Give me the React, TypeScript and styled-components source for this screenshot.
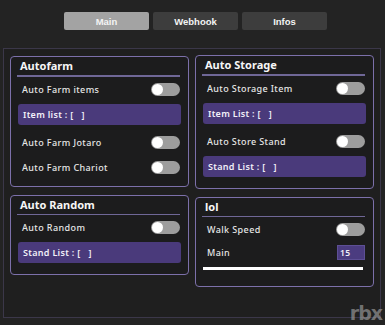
import React from "react";
import styled, { createGlobalStyle } from "styled-components";

const GlobalStyle = createGlobalStyle`
  html, body {
    margin: 0;
    padding: 0;
    background: #232323;
  }
  * {
    box-sizing: border-box;
  }
`;

const Screen = styled.div`
  position: relative;
  width: 385px;
  height: 325px;
  overflow: hidden;
  background: #232323;
  font-family: "Noto Sans", "Open Sans", sans-serif;
  color: #ececec;
`;

const TabBar = styled.div`
  display: flex;
  gap: 4px;
  padding: 12px 0 0 64px;
  height: 48px;
`;

const Tab = styled.div<{ active?: boolean }>`
  width: 85px;
  height: 18px;
  border-radius: 2px;
  display: flex;
  align-items: center;
  justify-content: center;
  font-family: "Liberation Sans", Arial, sans-serif;
  font-weight: 700;
  font-size: 9.5px;
  color: #f4f4f4;
  background: ${({ active }) => (active ? "#a3a3a3" : "#3d3d3d")};
`;

const Panel = styled.div`
  margin: 0 4px 0 3px;
  height: 270px;
  border: 1px solid #3b3749;
  background: #1f1f1f;
  padding: 6px 6px 0 6px;
  display: grid;
  grid-template-columns: 1fr 1fr;
  column-gap: 6px;
  align-items: start;
`;

const Column = styled.div<{ offset?: number }>`
  display: flex;
  flex-direction: column;
  gap: 8px;
  padding-top: ${({ offset }) => offset ?? 0}px;
`;

const Card = styled.div`
  border: 1.5px solid #7c70aa;
  border-radius: 4px;
  background: #1c1c1d;
  padding: 0 8px 6px 6px;
`;

const CardTitle = styled.div`
  height: 18px;
  padding: 2px 0 0 3px;
  font-weight: 700;
  font-size: 11px;
  line-height: 14px;
  color: #f6f6f6;
`;

const Divider = styled.div`
  height: 1.5px;
  background: #6f6797;
`;

const Row = styled.div<{ h?: number }>`
  height: ${({ h }) => h ?? 25}px;
  display: flex;
  align-items: center;
  justify-content: space-between;
  padding: 0 0 0 5px;
  font-size: 9px;
  font-weight: 500;
  letter-spacing: 0.4px;
  color: #e6e6e6;
`;

const ListBox = styled.div`
  height: 21px;
  margin: 2px -1px 5px 1px;
  border-radius: 3px;
  background: #4a3a7b;
  display: flex;
  align-items: center;
  padding-left: 5px;
  font-size: 9px;
  font-weight: 600;
  letter-spacing: 0.3px;
  color: #f2f0f8;
  white-space: pre;
`;

const Toggle = styled.div`
  width: 29px;
  height: 13px;
  border-radius: 7px;
  background: #9d9d9d;
  display: flex;
  align-items: center;
  padding-left: 1px;
  flex-shrink: 0;
`;

const Knob = styled.div`
  width: 11px;
  height: 11px;
  border-radius: 50%;
  background: #ffffff;
`;

const NumberBox = styled.div`
  width: 28px;
  height: 15px;
  background: #4b3c80;
  border: 1px solid #5d4f95;
  display: flex;
  align-items: center;
  padding-left: 2px;
  font-size: 8.5px;
  font-weight: 600;
  color: #f2f0f8;
`;

const Slider = styled.div`
  height: 2.5px;
  margin: 5px 2px 10px 1px;
  background: #ffffff;
`;

const Watermark = styled.div`
  position: absolute;
  right: 3px;
  bottom: 0;
  line-height: 24px;
  font-family: "DejaVu Sans", sans-serif;
  font-weight: 700;
  font-size: 19px;
  letter-spacing: -1px;
  color: rgba(150, 150, 150, 0.7);
`;

const Switch = () => (
  <Toggle>
    <Knob />
  </Toggle>
);

const ToggleRow = ({ label }: { label: string }) => (
  <Row>
    <span>{label}</span>
    <Switch />
  </Row>
);

const EMPTY = "[\u00a0\u00a0\u00a0]";

export default function App() {
  return (
    <Screen>
      <GlobalStyle />
      <TabBar>
        <Tab active>Main</Tab>
        <Tab>Webhook</Tab>
        <Tab>Infos</Tab>
      </TabBar>
      <Panel>
        <Column offset={1}>
          <Card>
            <CardTitle>Autofarm</CardTitle>
            <Divider />
            <ToggleRow label="Auto Farm items" />
            <ListBox>Item list : {EMPTY}</ListBox>
            <ToggleRow label="Auto Farm Jotaro" />
            <ToggleRow label="Auto Farm Chariot" />
          </Card>
          <Card>
            <CardTitle>Auto Random</CardTitle>
            <Divider />
            <ToggleRow label="Auto Random" />
            <ListBox>Stand List : {EMPTY}</ListBox>
          </Card>
        </Column>
        <Column>
          <Card>
            <CardTitle>Auto Storage</CardTitle>
            <Divider />
            <ToggleRow label="Auto Storage Item" />
            <ListBox>Item List : {EMPTY}</ListBox>
            <ToggleRow label="Auto Store Stand" />
            <ListBox>Stand List : {EMPTY}</ListBox>
          </Card>
          <Card>
            <CardTitle>lol</CardTitle>
            <Divider />
            <ToggleRow label="Walk Speed" />
            <Row h={20}>
              <span>Main</span>
              <NumberBox>15</NumberBox>
            </Row>
            <Slider />
          </Card>
        </Column>
      </Panel>
      <Watermark>rbx</Watermark>
    </Screen>
  );
}
